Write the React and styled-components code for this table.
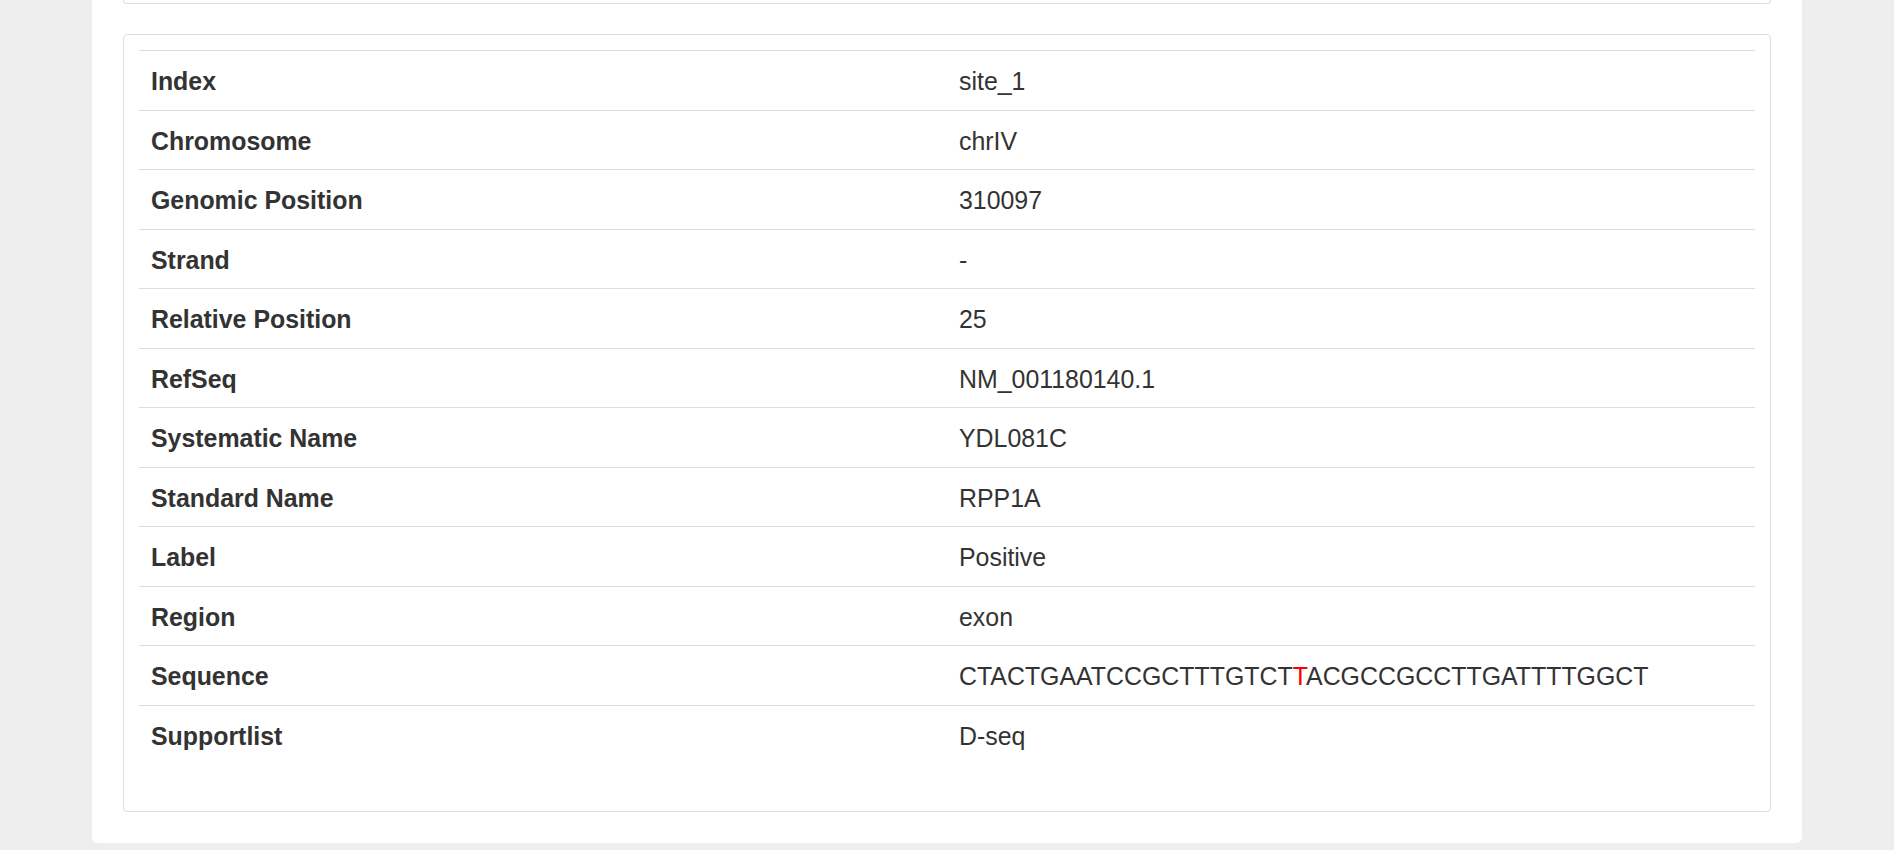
import React from "react";
import styled, { createGlobalStyle } from "styled-components";

const GlobalStyle = createGlobalStyle`
  html, body {
    margin: 0;
    padding: 0;
    background: #eeeeee;
  }
  body {
    font-family: "Liberation Sans", Arial, Helvetica, sans-serif;
    color: #333333;
  }
`;

const Container = styled.div`
  width: 1710px;
  margin: 0 auto;
  background: #ffffff;
  border-radius: 0 0 6px 6px;
  padding: 0 31px 31px;
  box-sizing: border-box;
`;

const PanelTail = styled.div`
  height: 3px;
  border: 1px solid #dddddd;
  border-top: none;
  border-radius: 0 0 4px 4px;
  margin-bottom: 30px;
`;

const Panel = styled.div`
  border: 1px solid #dddddd;
  border-radius: 4px;
  padding: 15px 15px 15px;
`;

const Table = styled.table`
  width: 100%;
  border-collapse: separate;
  border-spacing: 0;
  margin-bottom: 32px;
  font-size: 24.9px;
  line-height: 34.5px;
`;

const Cell = styled.td`
  width: 50%;
  padding: 13px 12px 11px;
  border-top: 1px solid #dddddd;
  vertical-align: top;
  text-align: left;
  font-weight: ${(p) => (p.$label ? 700 : 400)};
  color: #333333;
`;

const Mutation = styled.span`
  color: #ff0000;
`;

const rows = [
  ["Index", "site_1"],
  ["Chromosome", "chrIV"],
  ["Genomic Position", "310097"],
  ["Strand", "-"],
  ["Relative Position", "25"],
  ["RefSeq", "NM_001180140.1"],
  ["Systematic Name", "YDL081C"],
  ["Standard Name", "RPP1A"],
  ["Label", "Positive"],
  ["Region", "exon"],
  [
    "Sequence",
    <>
      CTACTGAATCCGCTTTGTCT<Mutation>T</Mutation>ACGCCGCCTTGATTTTGGCT
    </>,
  ],
  ["Supportlist", "D-seq"],
];

export default function App() {
  return (
    <>
      <GlobalStyle />
      <Container>
        <PanelTail />
        <Panel>
          <Table>
            <tbody>
              {rows.map(([k, v]) => (
                <tr key={k}>
                  <Cell $label>{k}</Cell>
                  <Cell>{v}</Cell>
                </tr>
              ))}
            </tbody>
          </Table>
        </Panel>
      </Container>
    </>
  );
}
